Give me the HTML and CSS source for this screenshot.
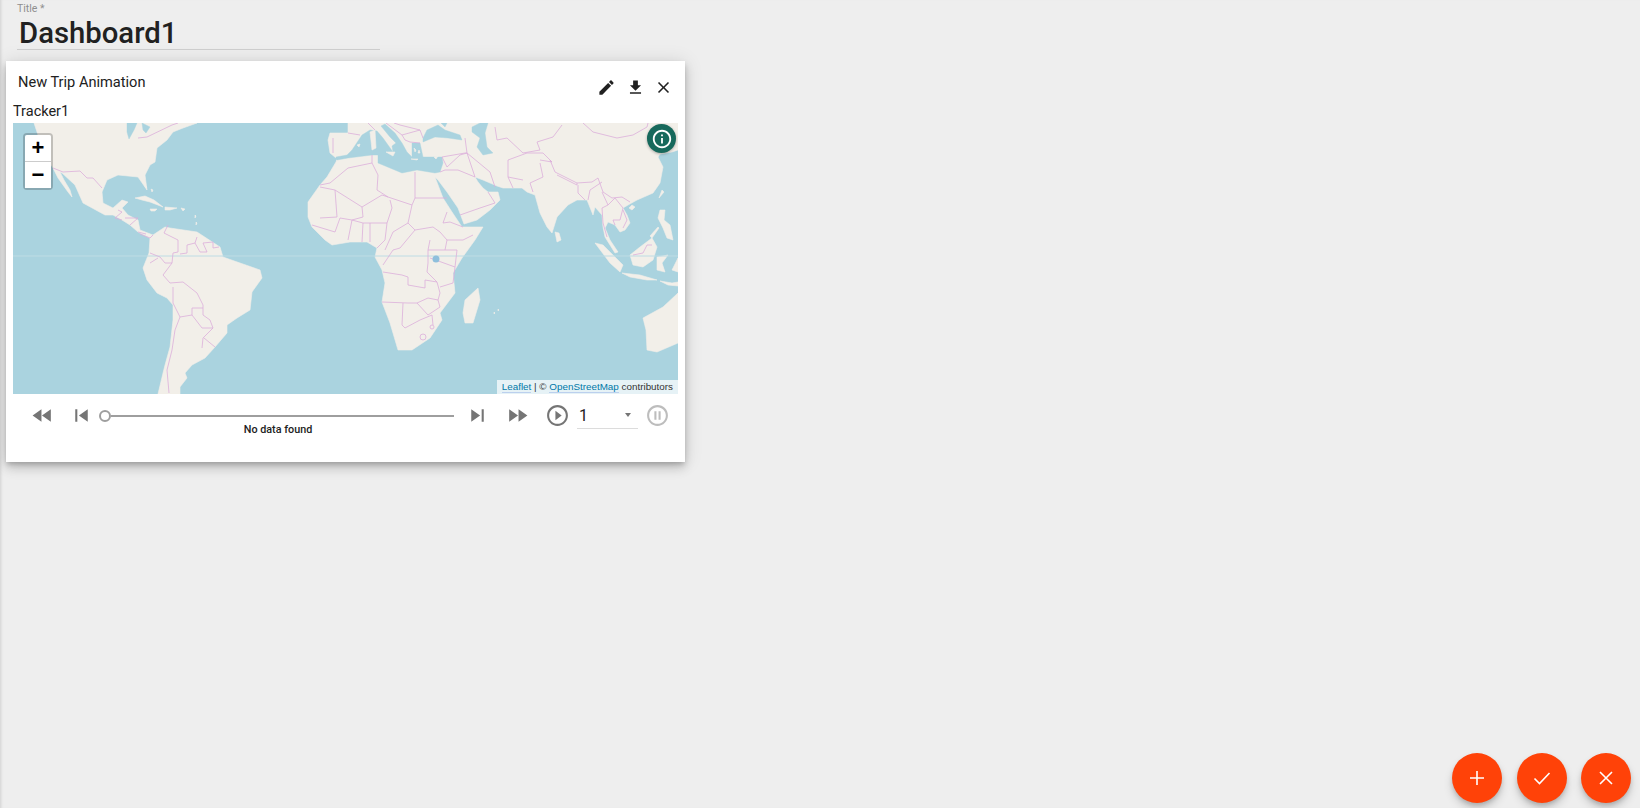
FILE: index.html
```html
<!DOCTYPE html>
<html lang="en">
<head>
<meta charset="UTF-8">
<title>Dashboard1</title>
<link rel="stylesheet" href="styles.css">
</head>
<body>
<div class="page">
    <div class="title_field">
        <div class="title_label">Title *</div>
        <div class="title_value">Dashboard1</div>
    </div>

    <div class="card">
        <div class="card_head">
            <span class="card_title">New Trip Animation</span>
            <div class="card_actions">
                <svg class="head_icon" viewBox="0 0 24 24"><path d="M3 17.25V21h3.75L17.81 9.94l-3.75-3.75L3 17.25zM20.71 7.04c.39-.39.39-1.02 0-1.41l-2.34-2.34c-.39-.39-1.02-.39-1.41 0l-1.83 1.83 3.75 3.75 1.83-1.83z"/></svg>
                <svg class="head_icon" viewBox="0 0 24 24"><path d="M19 9h-4V3H9v6H5l7 7 7-7zM5 18v2h14v-2H5z"/></svg>
                <svg class="head_icon" viewBox="0 0 24 24"><path d="M19 6.41L17.59 5 12 10.59 6.41 5 5 6.41 10.59 12 5 17.59 6.41 19 12 13.41 17.59 19 19 17.59 13.41 12z"/></svg>
            </div>
        </div>
        <div class="tracker_name">Tracker1</div>

        <div class="map">
            <svg class="map_svg" viewBox="13 123 665 271">
                <g class="map_tiles">
                    <!-- americas -->
                    <path class="land" d="M34 123L38 135 43 150 48 160 53 168 58 178 68 192 72 197 70 190 64 180 60 172 62 173 75 185 83 203 105 215 113 215 122 220 130 225 138 232 150 238 149 253 143 268 147 280 157 293 167 298 173 305 173 320 170 347 165 365 163 373 158 394 180 394 180 387 187 378 185 373 192 365 205 358 215 347 227 333 227 325 237 318 250 310 252 292 262 278 260 270 240 263 223 257 220 247 197 232 170 228 165 227 153 235 140 230 138 220 128 215 122 208 128 202 122 200 113 208 103 203 102 192 107 180 118 175 138 177 147 190 145 175 150 165 155 162 157 148 167 140 173 132 183 128 197 123z"/>
                    <path class="land" d="M135 198L145 196 154 200 163 207 150 202 142 200zM165 207L177 208 170 210 165 210zM150 209L157 209 155 211 151 211zM181 208L185 209 183 211z"/>
                    <path class="land" d="M151 189L153 190 152 192zM145 186L147 187 146 188zM195 215L196 216 195 218zM196 222L197 223 196 225z"/>
                    <!-- africa and eurasia in one shape, the seas are laid over it -->
                    <path class="land" d="M348 123L678 123 678 150 672 152 660 154 658 157 663 167 660 183 653 193 637 200 628 205 623 208 627 215 630 223 625 230 620 232 615 225 608 222 605 228 610 240 618 252 615 253 605 237 603 227 602 215 595 207 593 215 587 200 577 200 568 205 557 217 552 233 547 227 540 213 535 195 527 192 522 188 503 188 497 186 483 180 475 177 478 182 483 188 488 192 498 192 500 200 490 210 477 220 464 224 458 208 447 192 438 180 435 177 443 198 452 212 462 227 483 227 475 240 462 258 453 273 455 293 440 313 442 320 430 338 412 350 398 350 390 323 382 302 385 283 382 270 375 257 377 248 367 242 350 242 332 245 325 240 312 227 308 217 308 202 320 185 327 177 336 162 337 159 336 158 330 153 328 140 330 133 348 133z"/>
                    <path class="water" d="M336 159L336 157 347 155 352 150 362 135 370 130 377 131 383 138 393 152 392 146 396 143 390 137 381 126 385 124 395 133 402 143 407 152 412 157 412 143 420 143 423 157 442 157 443 163 440 172 435 173 417 170 402 173 390 168 378 163 378 155 372 155 348 158 337 160z"/>
                    <path class="water" d="M423 138L427 130 438 125 445 130 460 135 462 140 448 138 435 137 423 142zM441 123L447 123 445 127z"/>
                    <path class="water" d="M472 127L480 123 488 123 485 133 487 147 493 153 483 155 477 147 480 138 472 132z"/>
                    <path class="land" d="M370 132L375 130 376 148 372 150zM386 152L395 152 393 156zM357 145L360 144 359 147zM411 159L418 159 417 160zM434 157L438 156 436 159zM414 148L416 150 415 152zM419 150L420 153 418 153z"/>
                    <!-- asia islands -->
                    <path class="land" d="M595 243L603 245 623 265 620 272 610 263zM622 273L640 275 657 280 647 280 630 277zM630 255L640 247 652 238 657 247 653 260 643 267 633 265zM657 257L668 255 662 263 665 272 657 270zM660 210L665 210 664 220 670 225 673 240 667 238 663 228 658 218zM662 190L664 192 659 198zM555 232L559 233 561 240 557 242zM632 205L635 207 632 210 629 208zM650 236L658 227 659 228 652 238zM660 281L672 283 678 282 678 286 668 285zM676 262L678 258 678 272 672 270zM478 288L480 300 473 323 465 323 463 313 465 300z"/>
                    <path class="land" d="M678 293L663 307 643 318 646 330 647 350 657 352 678 343z"/>
                    <path class="land" d="M494 312L495 313 494 314zM498 309L499 310 498 311z"/>
                    <!-- great lakes and equator -->
                    <path class="water" d="M127 123L137 123 134 130 129 139 127 132zM142 123L150 127 146 133 143 130z"/>
                    <path class="equator" d="M13 256H678"/>
                    <!-- americas borders -->
                    <path class="border" d="M53 168L63 172 80 171 87 178 93 178 102 188M138 138L147 137 172 125 178 123M118 210L122 212 115 218 122 220M125 218L138 218 130 225M138 232L146 234M140 234L150 238 153 235M168 225L164 233 178 240 178 252 173 253 172 263M197 237L195 243 187 245 187 253 180 254M195 243L200 252 207 252 203 243 213 242 213 248 219 247M150 253L155 255 160 257 165 263 172 263 163 275 170 283 183 282 197 293 203 305 203 308 192 308 192 315 202 328 213 328 210 320 203 315 203 308M150 263L158 258M173 287L173 303 180 317 175 330 172 350 167 370 169 393M180 317L192 315M213 328L203 338 202 348M204 338L215 347"/>
                    <!-- africa borders -->
                    <path class="border" d="M320 185L330 183 348 168 372 163M372 155L372 163 378 175 377 190 388 197 412 205 415 198 415 172M415 198L447 198M320 187L335 190 362 207 382 195 388 197M335 190L337 217 320 218M362 207L363 217 352 220 340 218M390 200L392 208 387 223 363 223 352 220M412 205L408 223 415 230 433 227 440 232 447 240 463 240 473 235M447 212L443 223 450 222 463 227M408 223L393 232 385 250M415 230L400 248 393 250 383 265M340 218L335 232 312 225M352 220L348 240M363 223L362 242M370 223L370 242M387 223L385 240 377 248M428 250L428 263 427 272 437 282 440 293 438 300 428 298 417 303 408 303 382 302M383 272L402 275 408 277 408 285 425 288 425 280 437 282M403 303L402 325 405 328 420 320 432 315 433 325M417 303L428 315 440 307 438 300M430 258L455 267 453 283 440 287M457 250L455 267M430 240L428 250 440 250 457 250M447 240L445 250"/>
                    <!-- asia and europe borders -->
                    <path class="border" d="M333 138L333 153M348 133L360 135M368 123L375 130M386 123L402 135 405 140 410 142 420 143M402 135L420 130 423 138M400 125L420 130M394 123L400 125M442 157L447 167 460 155 467 153 475 177M442 157L465 153 467 153M465 138L467 153M445 170L458 170 475 177M440 172L445 170M488 192L495 203 480 208 460 215M467 153L490 172 495 187M495 127L497 140 507 138 523 153 540 150 537 142 553 137 562 125M508 160L508 177 513 188M508 160L527 153 543 153 552 162 540 160M552 162L550 160 555 172 577 183 592 182 598 178 603 192 612 198 622 197 630 202M540 163L543 177 530 183 533 192M523 180L508 177M583 123L593 132 617 138 633 135 647 127 648 123M557 175L577 185 577 183M578 185L578 193 585 200M588 200L590 190 602 182M602 192L608 205 602 208 603 223 607 237M608 205L615 198 623 208 620 220 613 220 615 225M623 210L627 220 623 228M633 255L643 253 647 245 652 245"/>
                    <circle class="border" cx="423" cy="337" r="3"/>
                    <circle class="border" cx="432" cy="327" r="2"/>
                    <circle class="lake" cx="436" cy="259" r="3.5"/>
                </g>
            </svg>

            <div class="zoom_box">
                <div class="zoom_btn zoom_in">+</div>
                <div class="zoom_btn">&#x2212;</div>
            </div>
            <div class="info_btn">
                <svg class="info_icon" viewBox="0 0 24 24"><path d="M11 17h2v-6h-2v6zm1-15C6.48 2 2 6.48 2 12s4.48 10 10 10 10-4.48 10-10S17.52 2 12 2zm0 18c-4.41 0-8-3.59-8-8s3.59-8 8-8 8 3.59 8 8-3.59 8-8 8zM11 9h2V7h-2v2z"/></svg>
            </div>
            <div class="attribution"><a>Leaflet</a> | &copy; <a>OpenStreetMap</a> contributors</div>
        </div>

        <div class="controls">
            <svg class="ctrl_icon ctrl_rewind" viewBox="0 0 24 24"><path d="M11 18V6l-8.5 6 8.5 6zm.5-6l8.5 6V6l-8.5 6z"/></svg>
            <svg class="ctrl_icon ctrl_prev" viewBox="0 0 24 24"><path d="M6 6h2v12H6zm3.5 6l8.5 6V6z"/></svg>
            <div class="slider_wrap">
                <div class="slider">
                    <span class="slider_thumb"></span>
                    <span class="slider_line"></span>
                </div>
                <div class="slider_msg">No data found</div>
            </div>
            <svg class="ctrl_icon ctrl_next" viewBox="0 0 24 24"><path d="M6 18l8.5-6L6 6v12zM16 6v12h2V6h-2z"/></svg>
            <svg class="ctrl_icon ctrl_forward" viewBox="0 0 24 24"><path d="M4 18l8.5-6L4 6v12zm9-12v12l8.5-6L13 6z"/></svg>
            <svg class="ctrl_icon ctrl_play" viewBox="0 0 24 24"><path d="M10 16.5l6-4.5-6-4.5v9zM12 2C6.48 2 2 6.48 2 12s4.48 10 10 10 10-4.48 10-10S17.52 2 12 2zm0 18c-4.41 0-8-3.59-8-8s3.59-8 8-8 8 3.59 8 8-3.59 8-8 8z"/></svg>
            <div class="speed_select">
                <span class="speed_value">1</span>
                <span class="speed_arrow"></span>
            </div>
            <svg class="ctrl_icon ctrl_pause" viewBox="0 0 24 24"><path d="M9 16h2V8H9v8zm3-14C6.48 2 2 6.48 2 12s4.48 10 10 10 10-4.48 10-10S17.52 2 12 2zm0 18c-4.41 0-8-3.59-8-8s3.59-8 8-8 8 3.59 8 8-3.59 8-8 8zm1-4h2V8h-2v8z"/></svg>
        </div>
    </div>

    <div class="fab_row">
        <div class="fab">
            <svg class="fab_icon" viewBox="0 0 24 24"><path d="M19 12.8h-6.2V19h-1.6v-6.2H5v-1.6h6.2V5h1.6v6.2H19z"/></svg>
        </div>
        <div class="fab">
            <svg class="fab_icon fab_stroke" viewBox="0 0 24 24"><path d="M4.5 12.5l5 5L19.5 7"/></svg>
        </div>
        <div class="fab">
            <svg class="fab_icon fab_stroke" viewBox="0 0 24 24"><path d="M6 6l12 12M18 6L6 18"/></svg>
        </div>
    </div>
</div>
</body>
</html>
```

FILE: styles.css
```css
body {
    margin: 0;
    background-color: #eeeeee;
    font-family: Roboto, sans-serif;
    color: #212121;
}
.page {
    display: flex;
    flex-direction: column;
    height: 808px;
    overflow: hidden;
    box-shadow: inset 3px 0 3px -2px rgba(0, 0, 0, 0.12);
}

/* title */
.title_field {
    width: 363px;
    height: 50px;
    margin-left: 17px;
    padding-left: 2px;
    box-sizing: border-box;
    border-bottom: 1px solid #cfcfcf;
}
.title_label {
    margin-left: -2px;
    padding-top: 3px;
    font-size: 10.5px;
    line-height: 12px;
    color: #8f8f8f;
}
.title_value {
    padding-top: 2px;
    font-size: 29.3px;
    font-weight: 500;
    line-height: 33px;
}

/* card */
.card {
    width: 679px;
    height: 401px;
    margin: 11px 0 0 6px;
    padding: 0 7px;
    box-sizing: border-box;
    background-color: #fff;
    box-shadow: 0 3px 5px -1px rgba(0, 0, 0, 0.2), 0 6px 10px 0 rgba(0, 0, 0, 0.14), 0 1px 18px 0 rgba(0, 0, 0, 0.12);
}
.card_head {
    display: flex;
    justify-content: space-between;
    height: 41px;
}
.card_title {
    margin: 12px 0 0 5px;
    font-size: 14.6px;
    line-height: 18px;
}
.card_actions {
    display: flex;
    gap: 9.5px;
    margin: 17px 5px 0 0;
}
.head_icon {
    width: 19px;
    height: 19px;
    fill: #212121;
}
.tracker_name {
    height: 21px;
    font-size: 14.5px;
    line-height: 19px;
}

/* map */
.map {
    position: relative;
    width: 665px;
    height: 271px;
    overflow: hidden;
    background-color: #aad3df;
}
.map_svg {
    display: block;
    width: 665px;
    height: 271px;
}
.map_tiles {
    filter: blur(0.4px);
}
.land {
    fill: #f2efe9;
    stroke: #f2efe9;
    stroke-width: 0.6;
    stroke-linejoin: round;
}
.water {
    fill: #aad3df;
    stroke: #aad3df;
    stroke-width: 0.4;
    stroke-linejoin: round;
}
.lake {
    fill: #8fbfdc;
}
.equator {
    fill: none;
    stroke: #bedce4;
    stroke-width: 1;
}
.border {
    fill: none;
    stroke: #dcaedb;
    stroke-width: 0.8;
}
.zoom_box {
    position: absolute;
    top: 10px;
    left: 10px;
    width: 26px;
    border: 2px solid rgba(0, 0, 0, 0.2);
    border-radius: 4px;
    background-clip: padding-box;
}
.zoom_btn {
    height: 26px;
    background-color: #fff;
    color: #000;
    font: bold 22px/26px "Liberation Sans", sans-serif;
    text-align: center;
}
.zoom_in {
    height: 26px;
    border-bottom: 1px solid #ccc;
    border-radius: 2px 2px 0 0;
}
.info_btn {
    position: absolute;
    top: 1px;
    right: 2px;
    display: flex;
    align-items: center;
    justify-content: center;
    width: 29px;
    height: 29px;
    border-radius: 50%;
    background-color: #17695c;
    box-shadow: 0 1px 3px rgba(0, 0, 0, 0.3);
}
.info_icon {
    width: 22px;
    height: 22px;
    fill: #fff;
}
.attribution {
    position: absolute;
    right: 0;
    bottom: 0;
    padding: 0 5px;
    background-color: rgba(255, 255, 255, 0.7);
    color: #333;
    font: 9.85px/14px "Liberation Sans", sans-serif;
}
.attribution a {
    color: #0078a8;
    border-bottom: 1px solid #bcd0ee;
}

/* playback row */
.controls {
    display: flex;
    align-items: flex-start;
    padding-top: 9px;
}
.ctrl_icon {
    flex: none;
    width: 25px;
    height: 25px;
    fill: #757575;
}
.ctrl_rewind {
    margin-left: 17px;
}
.ctrl_prev {
    margin-left: 14px;
}
.ctrl_next {
    margin-left: 11px;
}
.ctrl_forward {
    margin-left: 15px;
}
.ctrl_play {
    margin-left: 15px;
}
.ctrl_pause {
    margin-left: 7px;
    fill: #bdbdbd;
}
.slider_wrap {
    width: 355px;
    margin-left: 5px;
}
.slider {
    display: flex;
    align-items: center;
    height: 25px;
}
.slider_thumb {
    flex: none;
    width: 8px;
    height: 8px;
    border: 2px solid #9e9e9e;
    border-radius: 50%;
}
.slider_line {
    flex: 1;
    height: 2px;
    background-color: #9e9e9e;
}
.slider_msg {
    margin-top: -5px;
    padding-left: 3px;
    font-size: 10.8px;
    font-weight: 500;
    line-height: 13px;
    text-align: center;
}
.speed_select {
    display: flex;
    justify-content: space-between;
    box-sizing: border-box;
    width: 61px;
    height: 26px;
    margin-left: 7px;
    padding: 2px 7px 0 2px;
    border-bottom: 1px solid #dcdcdc;
    font-size: 16px;
    line-height: 22px;
}
.speed_arrow {
    width: 0;
    height: 0;
    margin-top: 8px;
    border-top: 4px solid #757575;
    border-left: 3.5px solid transparent;
    border-right: 3.5px solid transparent;
}

/* bottom right buttons */
.fab_row {
    display: flex;
    justify-content: flex-end;
    gap: 14.5px;
    margin-top: auto;
    padding: 0 9px 5px 0;
}
.fab {
    display: flex;
    align-items: center;
    justify-content: center;
    width: 50px;
    height: 50px;
    border-radius: 50%;
    background-color: #ff4208;
    box-shadow: 0 3px 5px -1px rgba(0, 0, 0, 0.2), 0 6px 10px 0 rgba(0, 0, 0, 0.14);
}
.fab_icon {
    width: 24px;
    height: 24px;
    fill: #fff;
}
.fab_stroke {
    fill: none;
    stroke: #fff;
    stroke-width: 1.6;
}
```
